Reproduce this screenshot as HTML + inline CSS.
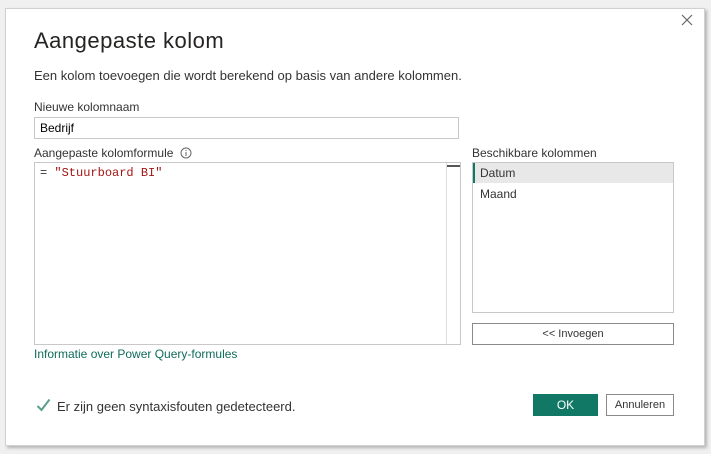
<!DOCTYPE html>
<html><head><style>
body{margin:0;width:711px;height:454px;background:#f0f0f0;font-family:"Liberation Sans",sans-serif;position:relative;overflow:hidden;color:#252423}
.d{position:absolute;left:5px;top:8px;width:698px;height:436px;background:#fff;border:1px solid #d0d0d0;box-shadow:2px 2px 3px rgba(0,0,0,.25)}
.a{position:absolute;white-space:nowrap}
.box{position:absolute;border:1px solid #c8c8c8;background:#fff;box-sizing:border-box}
</style></head><body>
<div class="d"></div>
<svg class="a" style="left:681px;top:14px" width="12" height="12"><path d="M1 1L11 11M11 1L1 11" stroke="#666" stroke-width="1.2"/></svg>
<div class="a" style="left:34px;top:28px;font-size:22px;letter-spacing:0.5px;color:#252423">Aangepaste kolom</div>
<div class="a" style="left:34px;top:68px;font-size:13px;color:#333">Een kolom toevoegen die wordt berekend op basis van andere kolommen.</div>
<div class="a" style="left:34px;top:100px;font-size:12px;color:#333">Nieuwe kolomnaam</div>
<div class="box" style="left:34px;top:117px;width:425px;height:22px"></div>
<div class="a" style="left:40px;top:121px;font-size:12px;color:#000">Bedrijf</div>
<div class="a" style="left:34px;top:146px;font-size:12px;color:#333">Aangepaste kolomformule</div>
<svg class="a" style="left:180px;top:147px" width="12" height="12"><circle cx="6" cy="6" r="5" fill="none" stroke="#666"/><path d="M6 5v4M6 3v1" stroke="#666"/></svg>
<div class="box" style="left:34px;top:162px;width:427px;height:183px"></div>
<div class="a" style="left:446px;top:163px;width:1px;height:181px;background:#ddd"></div>
<div class="a" style="left:447px;top:165px;width:13px;height:2px;background:#555"></div>
<div class="a" style="left:40px;top:166px;font-size:12px;font-family:'Liberation Mono',monospace;color:#333">= <span style="color:#a31515">"Stuurboard BI"</span></div>
<div class="a" style="left:472px;top:146px;font-size:12px;color:#333">Beschikbare kolommen</div>
<div class="box" style="left:472px;top:162px;width:202px;height:151px"></div>
<div class="a" style="left:473px;top:163px;width:200px;height:20px;background:#e8e8e8"></div>
<div class="a" style="left:473px;top:163px;width:2px;height:20px;background:#117865"></div>
<div class="a" style="left:480px;top:166px;font-size:12px;color:#333">Datum</div>
<div class="a" style="left:480px;top:187px;font-size:12px;color:#333">Maand</div>
<div class="box" style="left:472px;top:323px;width:202px;height:22px;border-color:#8a8a8a"></div>
<div class="a" style="left:472px;top:328px;width:202px;text-align:center;font-size:11px;color:#333">&lt;&lt; Invoegen</div>
<div class="a" style="left:34px;top:347px;font-size:12px;color:#0f6b5c">Informatie over Power Query-formules</div>
<svg class="a" style="left:36px;top:398px" width="15" height="14"><path d="M1.5 8L5.5 12L13.5 1.5" fill="none" stroke="#5a9e8d" stroke-width="2"/></svg>
<div class="a" style="left:57px;top:399px;font-size:13px;color:#333">Er zijn geen syntaxisfouten gedetecteerd.</div>
<div class="a" style="left:533px;top:394px;width:65px;height:22px;background:#117865;color:#fff;font-size:12px;text-align:center;line-height:22px">OK</div>
<div class="box" style="left:606px;top:394px;width:68px;height:22px;border-color:#8a8a8a;font-size:11px;text-align:center;line-height:20px;color:#333">Annuleren</div>
</body></html>
